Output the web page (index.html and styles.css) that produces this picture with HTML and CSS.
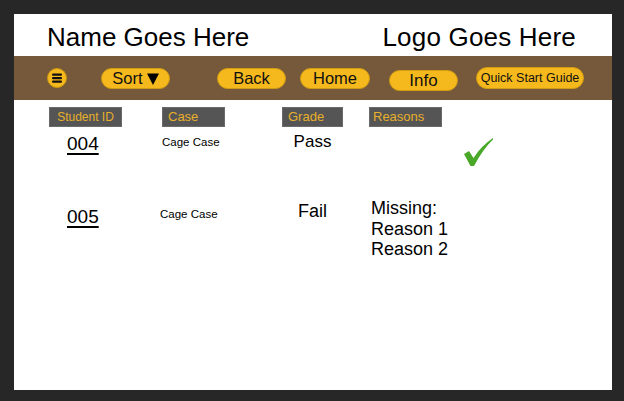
FILE: index.html
```html
<!DOCTYPE html>
<html>
<head>
<meta charset="utf-8">
<link rel="stylesheet" href="styles.css">
</head>
<body>
<div class="canvas">
  <header class="top">
    <div class="title">Name Goes Here</div>
    <div class="title">Logo Goes Here</div>
  </header>
  <nav class="nav">
    <span class="menu"><svg width="20" height="20" viewBox="0 0 20 20"><circle cx="10" cy="10" r="9.5" fill="#f6b91d" stroke="#c9960f" stroke-width="1"/><rect x="5" y="5.5" width="10" height="2.2" rx="1" fill="#111"/><rect x="5" y="9" width="10" height="2.2" rx="1" fill="#111"/><rect x="5" y="12.5" width="10" height="2.2" rx="1" fill="#111"/></svg></span>
    <span class="btn sort">Sort<svg class="tri" width="12" height="12" viewBox="0 0 12 12"><path d="M0 0.5 H12 L6 12 Z" fill="#000"/></svg></span>
    <span class="btn back">Back</span>
    <span class="btn home">Home</span>
    <span class="btn info">Info</span>
    <span class="btn qsg">Quick Start Guide</span>
  </nav>
  <section class="table">
    <div class="th th-id">Student ID</div>
    <div class="th th-case">Case</div>
    <div class="th th-grade">Grade</div>
    <div class="th th-reasons">Reasons</div>
    <div></div>

    <div class="row">
      <div class="cell id"><u>004</u></div>
      <div class="cell case r1">Cage Case</div>
      <div class="cell grade r1">Pass</div>
      <div class="cell reasons"></div>
      <div class="cell check"><svg width="32" height="32" viewBox="0 0 32 32"><path d="M2 18 L7 15 L11.5 22 Q19 10 31 2 L31 3.5 Q21 13 12 30 L8.5 30 Z" fill="#4aa828"/></svg></div>
    </div>

    <div class="row">
      <div class="cell id r2"><u>005</u></div>
      <div class="cell case r2">Cage Case</div>
      <div class="cell grade r2">Fail</div>
      <div class="cell reasons r2">Missing:<br>Reason 1<br>Reason 2</div>
      <div class="cell"></div>
    </div>
  </section>
</div>
</body>
</html>
```
FILE: styles.css
```css
html, body {
  margin: 0;
  padding: 0;
  background: #272727;
  font-family: "Liberation Sans", Arial, sans-serif;
  color: #000;
}
body {
  width: 624px;
  height: 401px;
  overflow: hidden;
}
.canvas {
  margin: 14px 0 0 14px;
  width: 598px;
  height: 376px;
  background: #fff;
}
.top {
  height: 42px;
  box-sizing: border-box;
  padding: 8px 36px 0 33px;
  display: flex;
  justify-content: space-between;
}
.title {
  font-size: 26px;
  line-height: 30px;
}
.title + .title {
  letter-spacing: 0.2px;
}
.nav {
  height: 44px;
  background: #76593a;
  display: flex;
  align-items: center;
  padding-left: 33px;
}
.menu {
  display: flex;
  width: 20px;
  height: 20px;
}
.btn {
  height: 21px;
  box-sizing: border-box;
  border: 1px solid #d29c12;
  background: #f6b91d;
  border-radius: 11px;
  display: flex;
  align-items: center;
  justify-content: center;
  font-size: 16.5px;
  color: #111;
  line-height: 1;
}
.sort { width: 69px; margin-left: 34px; }
.tri { margin-left: 4px; margin-top: 1px; }
.back { width: 69px; margin-left: 47px; }
.home { width: 70px; margin-left: 14px; }
.info { width: 69px; margin-left: 19px; margin-top: 4px; font-size: 17px; }
.qsg { width: 108px; height: 22px; margin-left: 18px; font-size: 12.5px; }

.table {
  display: grid;
  grid-template-columns: 113px 120px 87px 95px 1fr;
  padding-left: 35px;
  margin-top: 7px;
}
.row {
  display: contents;
}
.th {
  height: 20px;
  box-sizing: border-box;
  background: #555555;
  border: 1px solid #6a6a6a;
  color: #e8b02a;
  font-size: 13px;
  line-height: 18px;
  padding-left: 5px;
}
.th-id { width: 73px; padding-left: 0; text-align: center; font-size: 12px; }
.th-case { width: 63px; }
.th-grade { width: 61px; }
.th-reasons { width: 73px; padding-left: 3px; }

.cell {
  align-self: start;
}
.id {
  padding-left: 18px;
  font-size: 19px;
  line-height: 22px;
  margin-top: 6px;
  height: 57px;
}
.id u {
  text-decoration-thickness: 1.5px;
  text-underline-offset: 3px;
}
.id.r2 { margin-top: 16px; }
.case {
  font-size: 11.5px;
  line-height: 14px;
}
.case.r1 { margin-top: 8px; }
.case.r2 { margin-top: 17px; margin-left: -2px; }
.grade {
  width: 61px;
  text-align: center;
  font-size: 17px;
  line-height: 20px;
}
.grade.r1 { margin-top: 5px; }
.grade.r2 { margin-top: 11px; font-size: 18px; line-height: 21px; }
.reasons {
  padding-left: 2px;
  font-size: 18px;
  line-height: 20.5px;
}
.reasons.r2 { margin-top: 8px; }
.check {
  margin-top: 9px;
  margin-left: -2px;
  height: 32px;
}
```
